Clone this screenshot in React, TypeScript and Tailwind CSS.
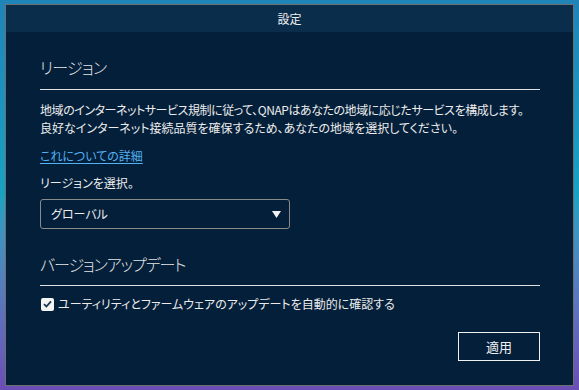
import React from "react";

const font = "font-['Noto_Sans_CJK_JP','Noto_Sans',sans-serif] [font-feature-settings:'palt']";

export default function App() {
  return (
    <div className={`w-[579px] h-[390px] overflow-hidden bg-gradient-to-b from-[#1f84b8] via-[#17a2c2] to-[#6b4db6] pt-[4px] pl-[5px] ${font}`}>
      <div className="w-[569px] h-[382px] border border-[#6f6f6f] flex flex-col">
        <div className="h-[27px] bg-[#0b2d4c] flex items-center justify-center text-[12px] leading-none text-[#f0f0f0]">
          設定
        </div>
        <div className="flex-1 bg-[#041f3a] pl-[34px] pr-[33px] pt-[25px] text-[#ececec]">
          <div className="text-[16px] leading-[20px] font-light tracking-[-0.8px] text-[#e6e6e6]">リージョン</div>
          <div className="mt-[12px] h-px bg-[#e0e0e0]" />
          <div className="mt-[11px] text-[12px] leading-[18px] whitespace-nowrap">
            <div className="tracking-[-0.45px]">地域のインターネットサービス規制に従って、QNAPはあなたの地域に応じたサービスを構成します。</div>
            <div>良好なインターネット接続品質を確保するため、あなたの地域を選択してください。</div>
          </div>
          <div className="mt-[10px] text-[12px] leading-[18px]">
            <span className="text-[#52b2f2] underline underline-offset-2">これについての詳細</span>
          </div>
          <div className="mt-[9px] text-[12px] leading-[18px]">リージョンを選択。</div>
          <div className="mt-[7px] w-[250px] h-[30px] border border-[#8a8a8a] rounded-[3px] flex items-center justify-between pl-[10px] pr-[8px] text-[12px]">
            <span>グローバル</span>
            <svg width="9" height="7" viewBox="0 0 9 7">
              <polygon points="0,0 9,0 4.5,7" fill="#f2f2f2" />
            </svg>
          </div>
          <div className="mt-[25px] text-[16px] leading-[20px] font-light tracking-[-1.1px] text-[#e6e6e6]">バージョンアップデート</div>
          <div className="mt-[11px] h-px bg-[#e0e0e0]" />
          <div className="mt-[9px] h-[18px] flex items-center gap-[4px] text-[12px]">
            <div className="ml-[1px] w-[13px] h-[13px] rounded-[2px] bg-[#f4f4f4] flex items-center justify-center">
              <svg width="9" height="8" viewBox="0 0 9 8">
                <path d="M1 4.2 L3.4 6.5 L8 1.3" fill="none" stroke="#1e3450" strokeWidth="1.8" />
              </svg>
            </div>
            <span>ユーティリティとファームウェアのアップデートを自動的に確認する</span>
          </div>
          <div className="mt-[19px] flex justify-end">
            <button className="w-[82px] h-[29px] border border-[#f0f0f0] text-[13px] text-[#f0f0f0] flex items-center justify-center">
              適用
            </button>
          </div>
        </div>
      </div>
    </div>
  );
}
